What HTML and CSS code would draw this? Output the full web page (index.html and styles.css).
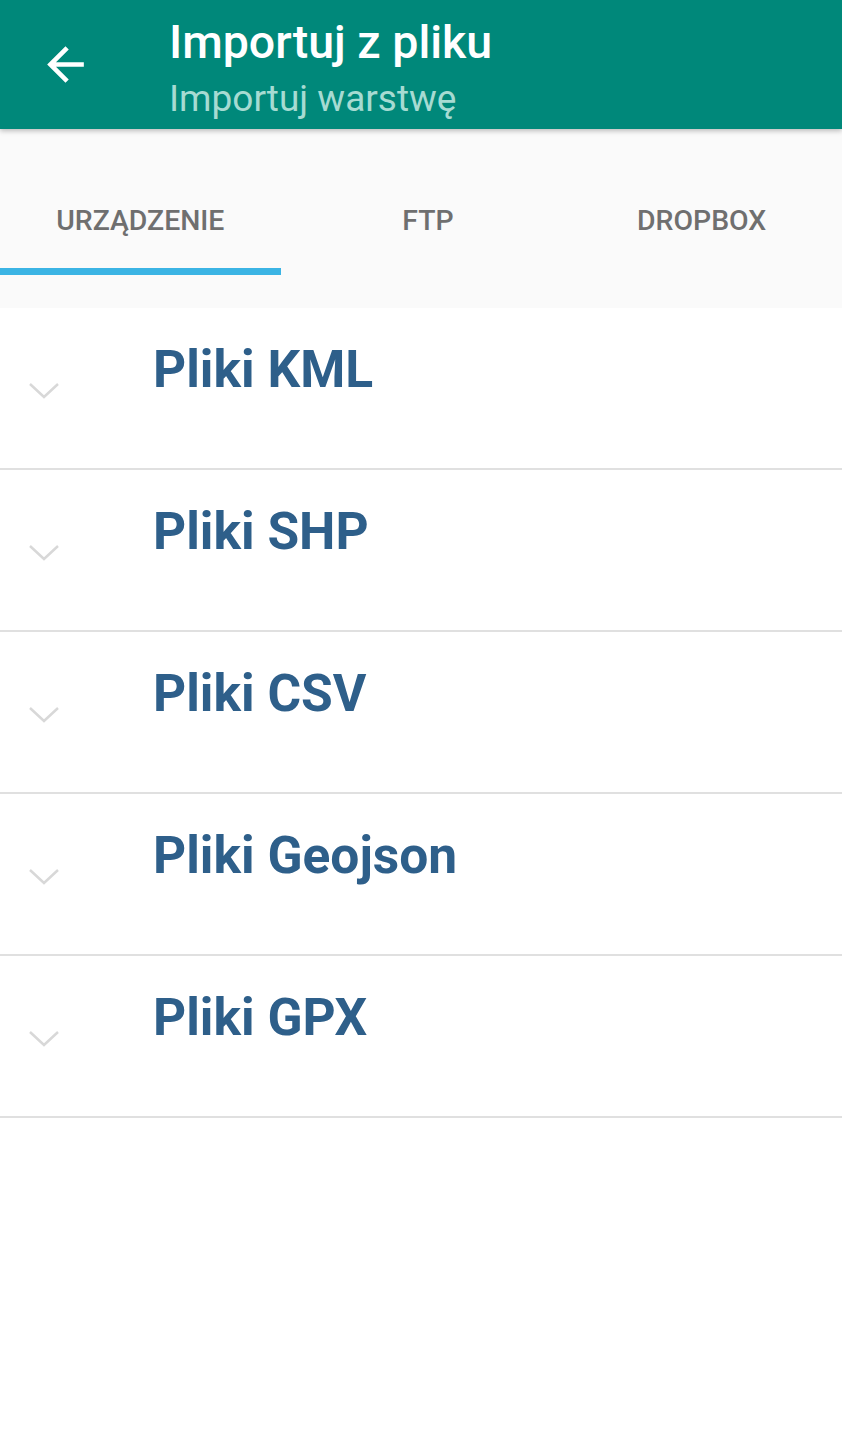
FILE: index.html
```html
<!DOCTYPE html>
<html lang="pl">
<head>
<meta charset="utf-8">
<link rel="stylesheet" href="styles.css">
</head>
<body>
<header class="appbar">
  <div class="back">
    <svg width="55" height="55" viewBox="0 0 24 24"><path d="M20 11H7.83l5.59-5.59L12 4l-8 8 8 8 1.41-1.41L7.83 13H20v-2z" fill="#fff"/></svg>
  </div>
  <div class="titles">
    <div class="title">Importuj z pliku</div>
    <div class="subtitle">Importuj warstwę</div>
  </div>
</header>
<nav class="tabs">
  <div class="tab active">URZĄDZENIE</div>
  <div class="tab mid">FTP</div>
  <div class="tab">DROPBOX</div>
</nav>
<ul class="list">
  <li class="item"><span class="chev"><svg width="32" height="18" viewBox="0 0 32 18"><path d="M2 2l14 13L30 2" fill="none" stroke="#d8d8d8" stroke-width="2.5"/></svg></span><span class="label">Pliki KML</span></li>
  <li class="item"><span class="chev"><svg width="32" height="18" viewBox="0 0 32 18"><path d="M2 2l14 13L30 2" fill="none" stroke="#d8d8d8" stroke-width="2.5"/></svg></span><span class="label">Pliki SHP</span></li>
  <li class="item"><span class="chev"><svg width="32" height="18" viewBox="0 0 32 18"><path d="M2 2l14 13L30 2" fill="none" stroke="#d8d8d8" stroke-width="2.5"/></svg></span><span class="label">Pliki CSV</span></li>
  <li class="item"><span class="chev"><svg width="32" height="18" viewBox="0 0 32 18"><path d="M2 2l14 13L30 2" fill="none" stroke="#d8d8d8" stroke-width="2.5"/></svg></span><span class="label">Pliki Geojson</span></li>
  <li class="item"><span class="chev"><svg width="32" height="18" viewBox="0 0 32 18"><path d="M2 2l14 13L30 2" fill="none" stroke="#d8d8d8" stroke-width="2.5"/></svg></span><span class="label">Pliki GPX</span></li>
</ul>
</body>
</html>
```
FILE: styles.css
```css
* { box-sizing: border-box; }
html, body { margin: 0; padding: 0; background: #fff; font-family: Roboto, "Noto Sans", sans-serif; }
.appbar {
  position: relative;
  z-index: 2;
  height: 129px;
  background: #00887a;
  display: flex;
  align-items: flex-start;
  box-shadow: 0 2px 5px rgba(0,0,0,0.25);
}
.back { width: 169px; padding-left: 38px; padding-top: 37px; }
.back svg { display: block; }
.titles { display: flex; flex-direction: column; padding-top: 14px; }
.title { color: #fff; font-size: 46.5px; font-weight: 500; line-height: 56px; }
.subtitle { color: #a6dbd2; font-size: 37px; font-weight: 400; line-height: 44px; margin-top: 7px; }
.tabs {
  display: grid;
  grid-template-columns: repeat(3, minmax(0, 1fr));
  background: #fafafa;
  height: 179px;
  align-items: start;
}
.tab {
  text-align: center;
  color: #6f6f6f;
  font-size: 28.4px;
  font-weight: 500;
  padding-top: 75px;
  height: 146px;
}
.tab.mid { padding-left: 14px; }
.tab.active { border-bottom: 7px solid #3bb4e4; }
.list { list-style: none; margin: 0; padding: 0; }
.item {
  height: 162px;
  border-bottom: 2px solid #e0e0e0;
  display: flex;
  align-items: flex-start;
}
.chev { width: 153px; padding-left: 28px; padding-top: 74px; }
.chev svg { display: block; }
.label { color: #2e5f8a; font-size: 51.5px; font-weight: 700; padding-top: 32px; line-height: 60px; }
```
